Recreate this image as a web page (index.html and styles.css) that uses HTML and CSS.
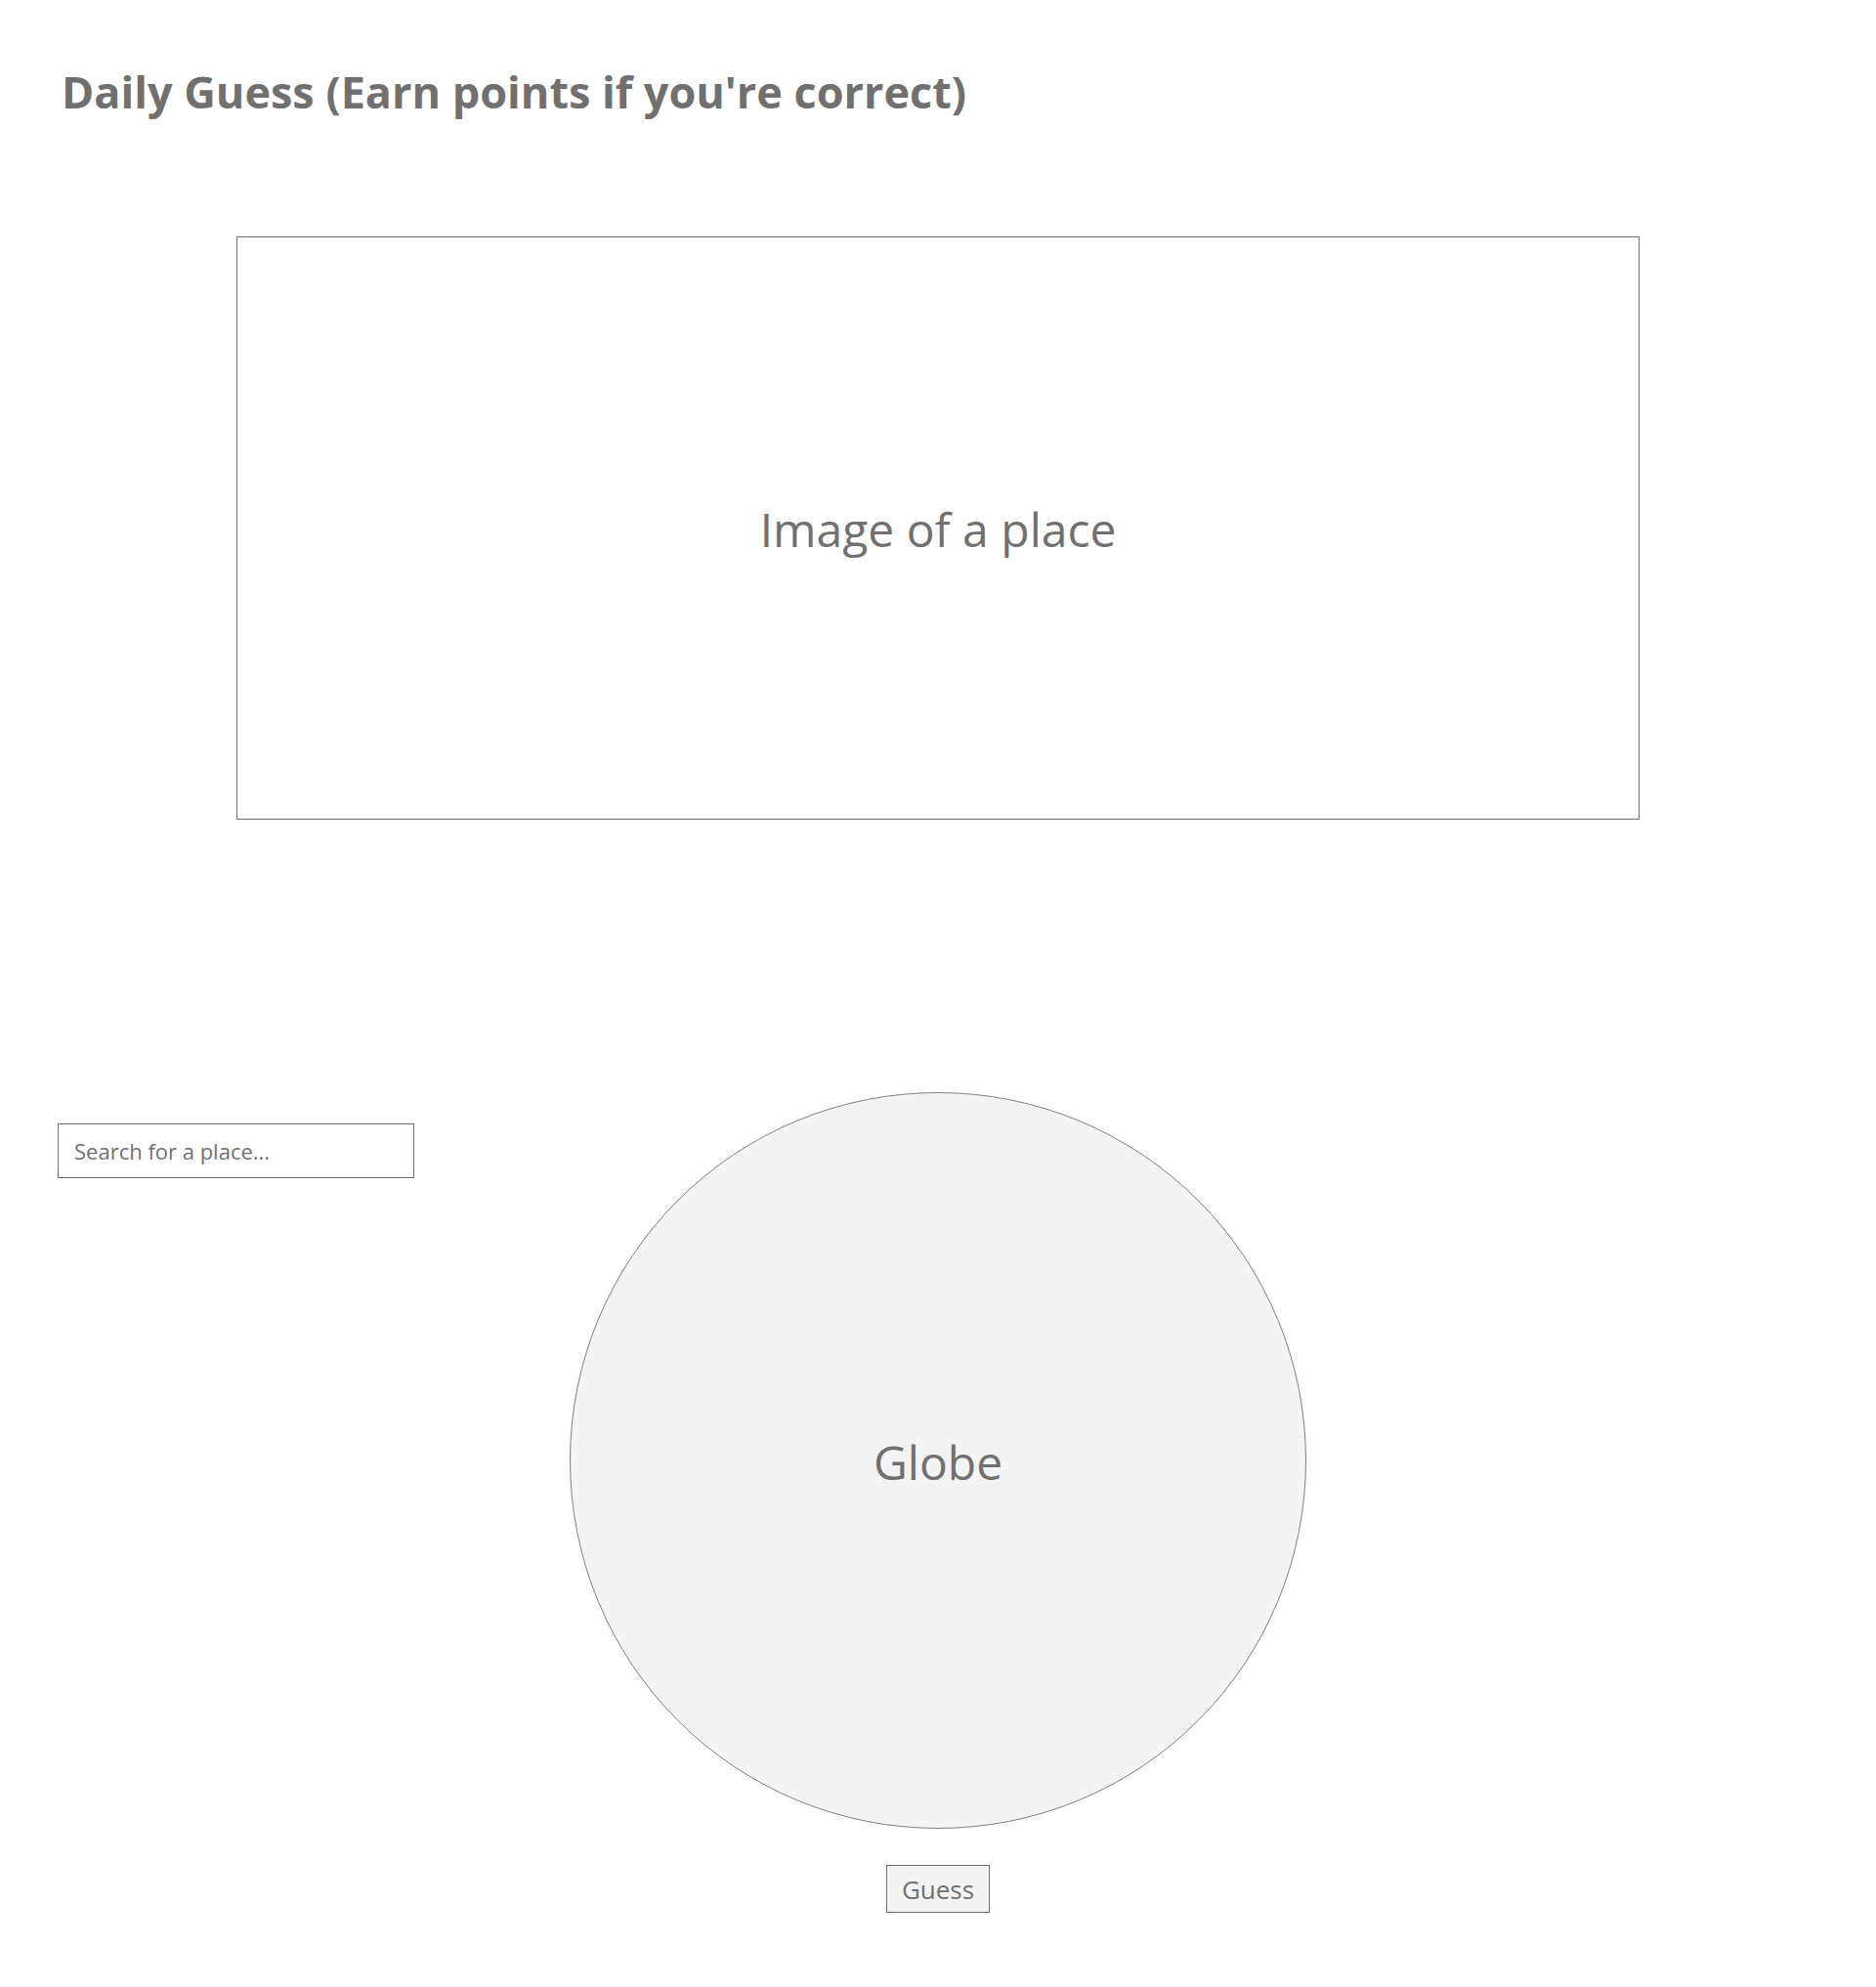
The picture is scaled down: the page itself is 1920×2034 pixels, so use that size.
FILE: index.html
```html
<!DOCTYPE html>
<html lang="en">
<head>
<meta charset="utf-8">
<title>Daily Guess</title>
<link rel="stylesheet" href="styles.css">
</head>
<body>
<main class="page">
  <h1 class="title">Daily Guess (Earn points if you're correct)</h1>
  <section class="image-box">
    <span class="image-label">Image of a place</span>
  </section>
  <section class="guess-area">
    <div class="search-col">
      <input class="search" type="text" placeholder="Search for a place...">
    </div>
    <div class="globe">
      <span class="globe-label">Globe</span>
    </div>
    <div class="spacer"></div>
  </section>
  <div class="actions">
    <button class="guess-btn" type="button">Guess</button>
  </div>
</main>
</body>
</html>
```

FILE: styles.css
```css
html, body {
  margin: 0;
  padding: 0;
  background: #ffffff;
}
body {
  font-family: "Open Sans", "Noto Sans", sans-serif;
  color: #707070;
}
.page {
  width: 1920px;
  height: 2034px;
  box-sizing: border-box;
  padding-top: 61px;
}
.title {
  margin: 0;
  padding-left: 63px;
  font-size: 45px;
  line-height: 65px;
  font-weight: 700;
  color: #707070;
}
.image-box {
  box-sizing: border-box;
  width: 1436px;
  height: 597px;
  margin: 116px auto 0;
  border: 1px solid #707070;
  display: flex;
  align-items: center;
  justify-content: center;
}
.image-label {
  font-size: 48px;
  line-height: 1;
  padding-top: 2px;
}
.guess-area {
  margin-top: 279px;
  display: grid;
  grid-template-columns: 1fr auto 1fr;
  align-items: start;
}
.search-col {
  padding-left: 59px;
  padding-top: 32px;
}
.search {
  box-sizing: border-box;
  width: 365px;
  height: 56px;
  border: 1px solid #707070;
  border-radius: 0;
  padding: 0 16px;
  font-family: "Open Sans", "Noto Sans", sans-serif;
  font-size: 22px;
  color: #707070;
  outline: none;
}
.search::placeholder {
  color: #707070;
  opacity: 1;
}
.globe {
  box-sizing: border-box;
  width: 754px;
  height: 754px;
  border-radius: 50%;
  border: 1px solid #808080;
  background: #f4f4f4;
  display: flex;
  align-items: center;
  justify-content: center;
}
.globe-label {
  font-size: 48px;
  line-height: 1;
  padding-top: 4px;
}
.actions {
  display: flex;
  justify-content: center;
  margin-top: 37px;
}
.guess-btn {
  box-sizing: border-box;
  width: 106px;
  height: 49px;
  border: 1px solid #707070;
  border-radius: 0;
  background: #f4f4f4;
  font-family: "Open Sans", "Noto Sans", sans-serif;
  font-size: 26px;
  color: #707070;
  padding: 0;
}
```
